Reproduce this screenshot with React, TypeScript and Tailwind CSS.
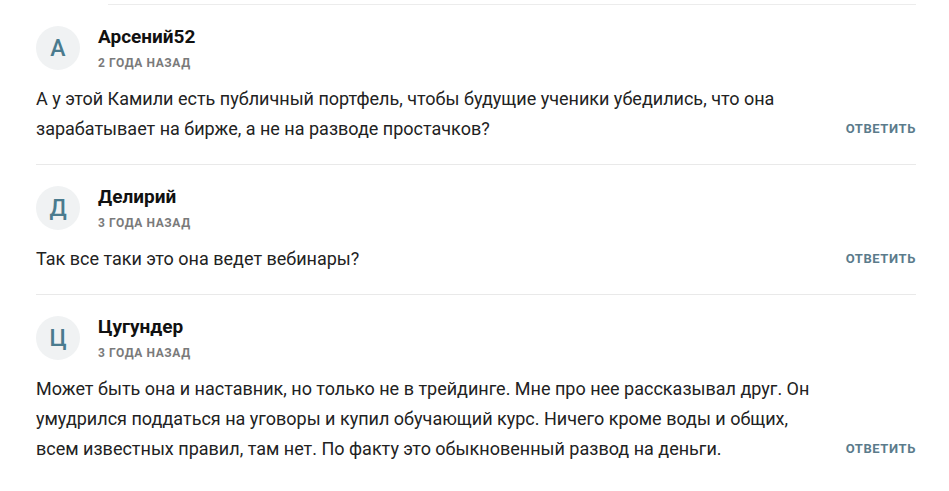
import React from "react";

type C = { letter: string; name: string; date: string; text: string[] };

const comments: C[] = [
  {
    letter: "А",
    name: "Арсений52",
    date: "2 года назад",
    text: [
      "А у этой Камили есть публичный портфель, чтобы будущие ученики убедились, что она зарабатывает на бирже, а не на разводе простачков?",
    ],
  },
  {
    letter: "Д",
    name: "Делирий",
    date: "3 года назад",
    text: ["Так все таки это она ведет вебинары?"],
  },
  {
    letter: "Ц",
    name: "Цугундер",
    date: "3 года назад",
    text: [
      "Может быть она и наставник, но только не в трейдинге. Мне про нее рассказывал друг. Он умудрился поддаться на уговоры и купил обучающий курс. Ничего кроме воды и общих, всем известных правил, там нет. По факту это обыкновенный развод на деньги.",
    ],
  },
];

function Comment({ c, first }: { c: C; first: boolean }) {
  return (
    <div className={first ? "" : "border-t border-[#e9e9e9]"}>
      <div className="pt-[21px] pb-[20px]">
        <div className="flex items-start gap-[18px]">
          <div className="w-[44px] h-[44px] rounded-full bg-[#f0f2f3] flex items-center justify-center text-[#4a7b8e] text-[23px] font-medium leading-none">
            {c.letter}
          </div>
          <div className="flex flex-col">
            <div className="text-[19px] font-bold text-[#111] leading-[22px]">{c.name}</div>
            <div className="text-[12px] font-bold text-[#7a7a7a] uppercase tracking-[0.6px] leading-[16px] mt-[7px]">
              {c.date}
            </div>
          </div>
        </div>
        <div className="flex items-end mt-[13px]">
          <div className="flex-1 text-[18px] leading-[30px] text-[#222] pr-[26px]">
            {c.text.map((t, i) => (
              <p key={i}>{t}</p>
            ))}
          </div>
          <button className="text-[13px] font-bold uppercase tracking-[0.6px] text-[#5b7b8b] leading-[30px] w-[72px] text-right">
            ответить
          </button>
        </div>
      </div>
    </div>
  );
}

export default function App() {
  return (
    <div
      className="w-[949px] h-[491px] bg-white overflow-hidden"
      style={{ fontFamily: "Roboto, 'Noto Sans', sans-serif" }}
    >
      <div className="pt-[4px] pl-[36px] pr-[33px]">
        <div className="ml-[72px] border-t border-[#ececec]" />
        {comments.map((c, i) => (
          <Comment key={i} c={c} first={i === 0} />
        ))}
      </div>
    </div>
  );
}
